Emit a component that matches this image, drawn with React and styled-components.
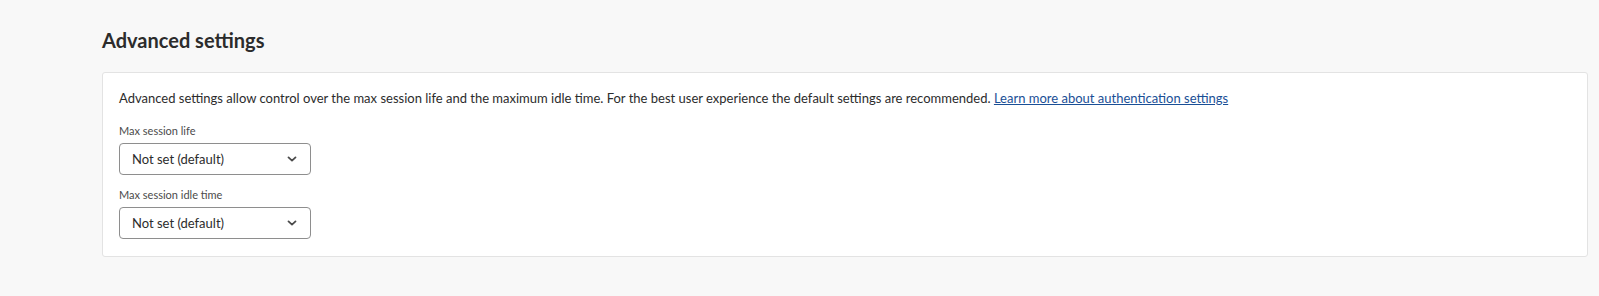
import React from 'react';
import styled, { createGlobalStyle } from 'styled-components';

const GlobalStyle = createGlobalStyle`
	html, body {
		margin: 0;
		padding: 0;
		background: #f8f8f8;
		font-family: Lato, "Open Sans", sans-serif;
		color: #2c2c2c;
	}
`;

const Page = styled.div`
	padding: 28px 11px 40px 102px;
`;

const Heading = styled.h2`
	margin: 0 0 20px;
	font-size: 20px;
	line-height: 24px;
	font-weight: 700;
	color: #2c2c2c;
`;

const Panel = styled.section`
	background: #fff;
	border: 1px solid #e3e3e3;
	border-radius: 3px;
	padding: 15px 16px 17px 16px;
`;

const Intro = styled.p`
	margin: 0 0 15px;
	font-size: 13px;
	line-height: 20px;
	color: #2c2c2c;
`;

const Link = styled.a`
	color: #1a4f96;
	text-decoration: underline;
	cursor: pointer;
`;

const Field = styled.div`
	display: flex;
	flex-direction: column;
	align-items: flex-start;
	gap: 4px;

	& + & {
		margin-top: 12px;
	}
`;

const Label = styled.label`
	font-size: 11px;
	line-height: 16px;
	color: #4b4b4b;
`;

const Select = styled.button`
	display: flex;
	align-items: center;
	justify-content: space-between;
	box-sizing: border-box;
	width: 192px;
	height: 32px;
	padding: 0 13px 0 12px;
	background: #fff;
	border: 1px solid #8e8e8e;
	border-radius: 4px;
	font-family: inherit;
	font-size: 13px;
	color: #2c2c2c;
	cursor: pointer;
`;

const Chevron = () => (
	<svg width="10" height="10" viewBox="0 0 10 10" aria-hidden="true">
		<path d="M1.5 3.4 L5 6.6 L8.5 3.4" fill="none" stroke="#4b4b4b" strokeWidth="1.8" strokeLinecap="round" strokeLinejoin="round" />
	</svg>
);

const fields = [
	{ id: 'life', label: 'Max session life', value: 'Not set (default)' },
	{ id: 'idle', label: 'Max session idle time', value: 'Not set (default)' },
];

const App = () => {
	return (
		<>
			<GlobalStyle />
			<Page>
				<Heading>Advanced settings</Heading>
				<Panel>
					<Intro>
						Advanced settings allow control over the max session life and the maximum idle time. For the best user experience the default settings are recommended.{' '}
						<Link>Learn more about authentication settings</Link>
					</Intro>
					{fields.map(f => (
						<Field key={f.id}>
							<Label htmlFor={f.id}>{f.label}</Label>
							<Select id={f.id}>
								<span>{f.value}</span>
								<Chevron />
							</Select>
						</Field>
					))}
				</Panel>
			</Page>
		</>
	);
};

export default App;
